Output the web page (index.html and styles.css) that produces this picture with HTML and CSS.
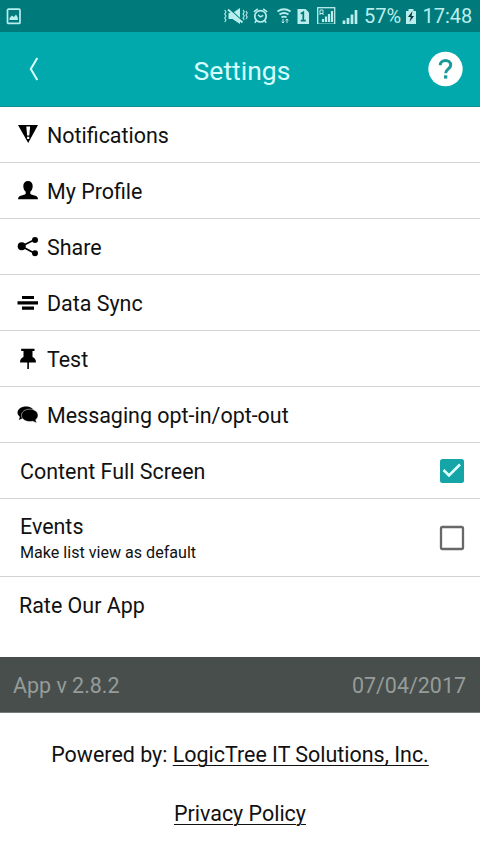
FILE: index.html
```html
<!DOCTYPE html>
<html lang="en">
<head>
<meta charset="utf-8">
<title>Settings</title>
<link rel="stylesheet" href="styles.css">
</head>
<body>
<div class="status">
  <svg class="status-photo" width="16" height="18" viewBox="0 0 16 18"><rect x="1.500" y="1.200" width="12.500" height="14.200" rx="1" fill="none" stroke="currentColor" stroke-width="1.700"/><path d="M3.500 12v-2l2.500-2.500 2 1.500 2-2.500 1.800 3V12z" fill="currentColor"/></svg>
  <svg class="status-icons" width="136" height="24" viewBox="0 0 136 24" fill="none" stroke="currentColor">
    <path d="M5.500 13h4l7.500-5v16l-7.500-5h-4z" fill="currentColor" stroke="none"/>
    <path d="M6.500 9L20 21.500" stroke="#007a7a" stroke-width="1.200"/><path d="M5 9.500L19.500 22.500" stroke-width="1.700"/>
    <path d="M1.700 10l1.300 2-1.300 2 1.300 2-1.300 2 1.300 2-1.300 2M20 10l1.300 2-1.300 2 1.300 2-1.300 2 1.300 2M23 11l1.200 2-1.200 2 1.200 2-1.200 2" stroke-width="1.100"/>
    <circle cx="37.500" cy="16.300" r="5.700" stroke-width="1.700"/><path d="M35 14.800l2.500 2 2.800-1.500M30.800 11.800l4-3M44.200 11.800l-4-3M33.300 20.800l-1.500 2M41.700 20.800l1.500 2" stroke-width="1.500"/>
    <path d="M54.500 11.500q6.500-4.500 13 0M56.500 14.500q4.500-3 9 0M58.500 17.500q2.500-1.800 5 0" stroke-width="1.900"/><path d="M60 19v4m-1.300-1.500L60 23l1.300-1.500M64 23v-4m-1.300 1.500L64 19l1.300 1.500" stroke-width="1"/>
    <path d="M74.500 9h8l3.500 3.500V24H74.500z" fill="currentColor" stroke="none"/>
    <path d="M77.800 13.700l2.500-1.500v8.500M77.800 20.700h5" stroke="#007a7a" stroke-width="1.700"/>
    <rect x="94.700" y="7.700" width="17" height="16.500" stroke-width="1.300"/>
    <path d="M100 22v-3M103 22v-5.500M106 22v-8M109 22V11" stroke-width="2.200"/><path d="M97 10h3v3.500h-3zM97 13.500V15M100 13.500V15" stroke-width="1"/>
    <path d="M121 24v-3.500M125 24v-6M129 24v-9.500M133 24V10" stroke-width="2.700"/>
  </svg>
  <span class="battery-level">57%</span>
  <svg class="battery" width="12" height="17" viewBox="0 0 12 17"><path d="M3.500 1h5v2H11v13H1V3h2.500z" fill="currentColor"/><path d="M7.500 3L3 9h2.800L4.500 14 9 8H6.500z" fill="#073b3b"/></svg>
  <span class="clock">17:48</span>
</div>
<header class="header">
  <svg class="back" width="14" height="26" viewBox="0 0 14 26"><path d="M10.300 2L3.800 13l6.500 11" fill="none" stroke="currentColor" stroke-width="2"/></svg>
  <h1>Settings</h1>
  <svg class="help" width="36" height="36" viewBox="0 0 36 36"><circle cx="18.500" cy="18" r="17.200" fill="#fff"/><path d="M13.300 14.300c0-6.300 10.400-6.300 10.400 0 0 3.500-5.100 3.800-5.100 8" fill="none" stroke="#179a9b" stroke-width="3"/><rect x="17" y="24.300" width="3.300" height="3.300" fill="#179a9b"/></svg>
</header>
<main>
  <div class="row">
    <svg class="icon" width="22" height="22" viewBox="0 0 22 22"><path d="M1 1h20L11.200 19z"/><path d="M9.300 2.500h3.800l-.8 9h-2.200zM10.100 12.800h2.200v2.200h-2.200z" fill="#fff"/></svg>
    <span>Notifications</span>
  </div>
  <div class="row">
    <svg class="icon" width="22" height="22" viewBox="0 0 22 22"><path d="M11 1c3 0 4.700 2 4.700 5 0 2.600-1 4.500-2.400 5.800v1.400c0 1 1 1.400 3.200 2 3 .8 4.500 1.500 4.500 4H1c0-2.500 1.500-3.200 4.500-4 2.200-.6 3.200-1 3.200-2v-1.400C7.300 10.500 6.300 8.600 6.300 6c0-3 1.700-5 4.700-5z"/></svg>
    <span>My Profile</span>
  </div>
  <div class="row">
    <svg class="icon" width="22" height="22" viewBox="0 0 22 22"><path d="M18 3.500L4.500 10.300 18 17.500" fill="none" stroke="#000" stroke-width="1.700"/><circle cx="4.700" cy="10.300" r="4"/><circle cx="18" cy="3.900" r="3"/><circle cx="18" cy="17.200" r="3"/></svg>
    <span>Share</span>
  </div>
  <div class="row">
    <svg class="icon" width="22" height="22" viewBox="0 0 22 22"><path d="M5 4h12v3H5zM.5 9.200h20.500v3.200H.5zM5 14.500h12v3.200H5z"/></svg>
    <span>Data Sync</span>
  </div>
  <div class="row">
    <svg class="icon" width="22" height="22" viewBox="0 0 22 22"><path d="M4.200.7h13.300V3h-2v6c2.200.8 3.500 2.500 3.500 5.500h-7.100V21h-1.600v-6.500H3c0-3 1.300-4.700 3.500-5.500V3H4.200z"/></svg>
    <span>Test</span>
  </div>
  <div class="row">
    <svg class="icon" width="22" height="22" viewBox="0 0 22 22"><path d="M9 2.500c4 0 7.500 2 8 4.500L9 15.500l-4-1L2 16l.8-3.300C1.300 11.500.5 10.300.5 8.800.5 5 4.200 2.500 9 2.500z"/><path d="M12.700 5.200c4.800 0 8.300 2.500 8.300 6 0 2.100-1 3.500-2.300 4.500l1 3.200-4-1.600c-1 .2-2 .3-3 .3-4.600 0-8.200-2.600-8.200-6.300s3.500-6.100 8.200-6.100z" stroke="#fff" stroke-width=".5"/></svg>
    <span>Messaging opt-in/opt-out</span>
  </div>
  <div class="row wide">
    <span>Content Full Screen</span>
    <svg class="check" width="26" height="26" viewBox="0 0 26 26"><rect x="1" y="1" width="24" height="24" rx="2.500" fill="#15a5a7"/><path d="M4.500 12l5.500 5.500L21 6.500" fill="none" stroke="#dfffff" stroke-width="2.600"/></svg>
  </div>
  <div class="row wide events">
    <div class="label"><div>Events</div><div class="hint">Make list view as default</div></div>
    <svg class="check" width="26" height="26" viewBox="0 0 26 26"><rect x="2" y="2" width="22" height="22" rx="1.500" fill="#fff" stroke="#686868" stroke-width="2.300"/></svg>
  </div>
  <div class="row rate"><span>Rate Our App</span></div>
</main>
<div class="version"><span>App v 2.8.2</span><span>07/04/2017</span></div>
<footer>
  <p>Powered by: <u>LogicTree IT Solutions, Inc.</u></p>
  <p><u>Privacy Policy</u></p>
</footer>
</body>
</html>
```
FILE: styles.css
```css
* { box-sizing: border-box; }
body { margin: 0; width: 480px; height: 854px; overflow: hidden; background: #fff; color: #111; font: 21.45px/28px Roboto, sans-serif; }
.status { display: flex; height: 32px; background: #007a7a; color: #b9eeee; font-size: 20px; line-height: 33px; }
.status-photo { margin: 8px 0 0 6px; }
.status-icons { margin-left: 201px; }
.battery-level { margin-left: 5px; width: 38px; white-space: nowrap; }
.battery { margin: 8px 0 0 3px; }
.clock { margin-left: 5.5px; white-space: nowrap; }
.header { display: flex; align-items: center; height: 75px; padding: 0 17px 0 27px; background: #02a9ac; border-bottom: 1px solid #168f91; color: #d8ffff; }
.header h1 { flex: 1; margin: 0; padding: 3px 0 0 16px; text-align: center; font-weight: 400; font-size: 26.5px; line-height: 34px; }
.row { display: flex; align-items: center; height: 56px; padding-left: 17px; border-bottom: 1px solid #d2d2d2; }
.row span, .label { padding-top: 2px; }
.row .icon { margin-right: 8px; flex: none; }
.row.wide { padding: 0 15px 0 20px; justify-content: space-between; }
.row.events { height: 78px; }
.hint { font-size: 16.1px; line-height: 23px; }
.row.rate { height: 80px; padding: 0 0 24px 19px; border-bottom: 0; }
.version { display: flex; justify-content: space-between; align-items: center; height: 56px; padding: 3px 14px 0 13px; background: #484e4c; color: #959c99; border-bottom: 1px solid #777d7b; }
footer { padding-top: 28px; text-align: center; }
footer p { margin: 0 0 31px; }
footer u { text-decoration-thickness: 1px; text-underline-offset: 3px; }
```
